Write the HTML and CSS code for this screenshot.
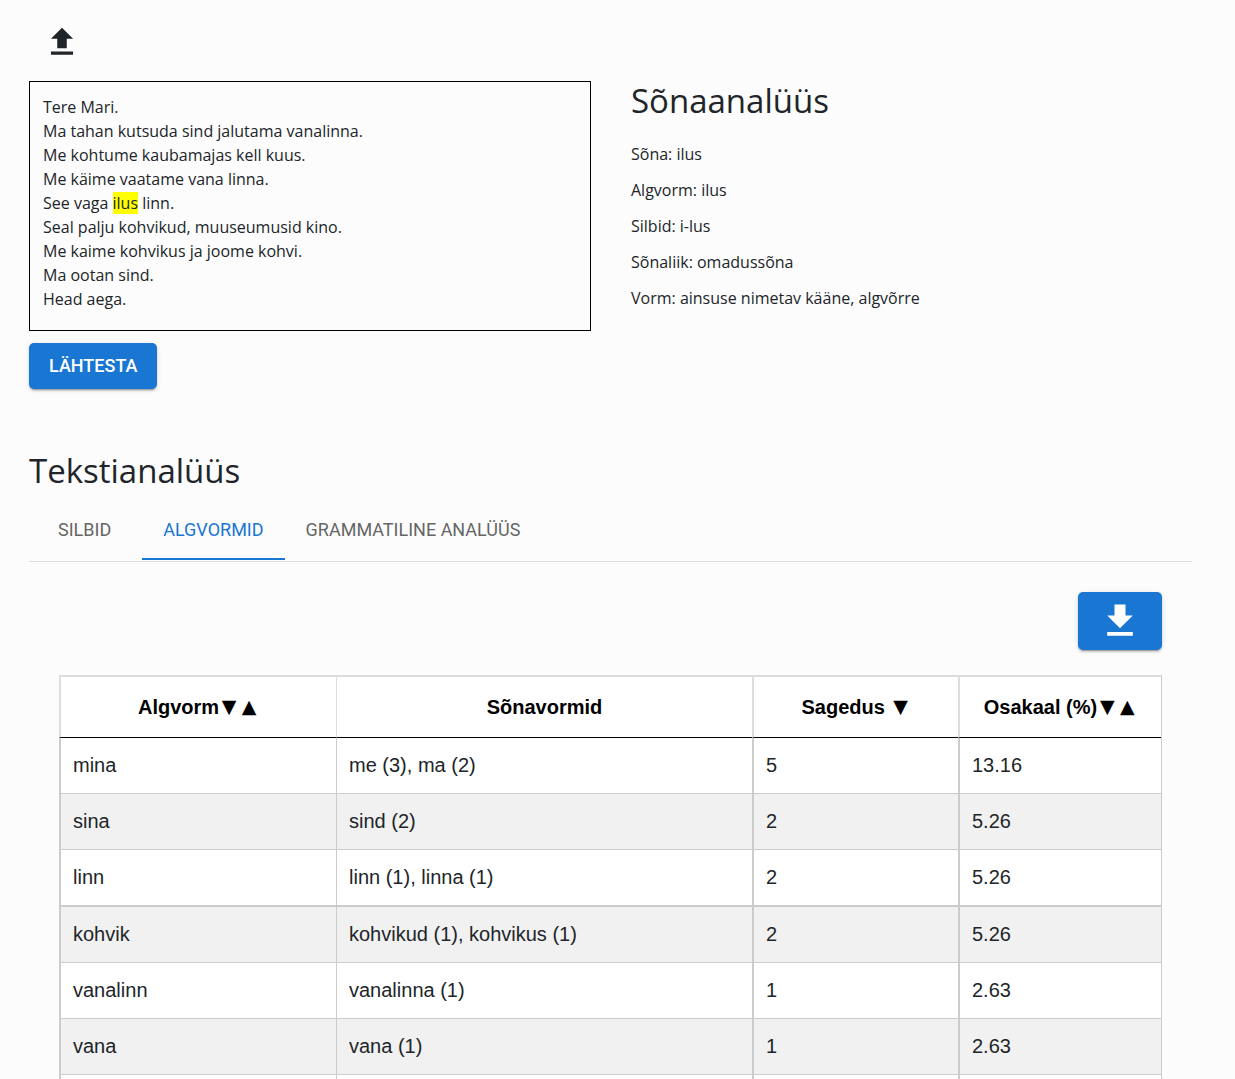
FILE: index.html
```html
<!DOCTYPE html>
<html lang="et">
<head>
<meta charset="utf-8">
<meta name="viewport" content="width=device-width, initial-scale=1">
<title>Tekstianalüüs</title>
<link rel="stylesheet" href="styles.css">
</head>
<body>
<main class="page">
  <button class="upload" type="button" aria-label="Laadi fail üles">
    <svg class="upload-icon" viewBox="0 0 24 24" aria-hidden="true"><path d="M5 20h14v-2H5v2zm0-10h4v6h6v-6h4l-7-7-7 7z"/></svg>
  </button>

  <div class="columns">
    <section class="input-side">
      <div class="text-box">
        Tere Mari.<br>
        Ma tahan kutsuda sind jalutama vanalinna.<br>
        Me kohtume kaubamajas kell kuus.<br>
        Me käime vaatame vana linna.<br>
        See vaga <mark>ilus</mark> linn.<br>
        Seal palju kohvikud, muuseumusid kino.<br>
        Me kaime kohvikus ja joome kohvi.<br>
        Ma ootan sind.<br>
        Head aega.
      </div>
      <button class="button reset" type="button">LÄHTESTA</button>
    </section>
    <section class="word-analysis">
      <h2>Sõnaanalüüs</h2>
      <p>Sõna: ilus</p>
      <p>Algvorm: ilus</p>
      <p>Silbid: i-lus</p>
      <p>Sõnaliik: omadussõna</p>
      <p>Vorm: ainsuse nimetav kääne, algvõrre</p>
    </section>
  </div>

  <section class="text-analysis">
    <h2>Tekstianalüüs</h2>
    <div class="tabs" role="tablist">
      <button class="tab" type="button" role="tab" aria-selected="false">SILBID</button>
      <button class="tab" type="button" role="tab" aria-selected="true">ALGVORMID</button>
      <button class="tab" type="button" role="tab" aria-selected="false">GRAMMATILINE ANALÜÜS</button>
    </div>
    <div class="panel" role="tabpanel">
      <button class="button download" type="button" aria-label="Laadi alla">
        <svg class="download-icon" viewBox="0 0 24 24" aria-hidden="true"><path d="M5 20h14v-2H5v2zM19 9h-4V3H9v6H5l7 7 7-7z"/></svg>
      </button>
      <table class="forms">
        <colgroup><col class="col-lemma"><col class="col-forms"><col class="col-count"><col class="col-share"></colgroup>
        <thead>
          <tr>
            <th scope="col">Algvorm<span class="sort">▼</span><span class="sort">▲</span></th>
            <th scope="col">Sõnavormid</th>
            <th scope="col">Sagedus <span class="sort">▼</span></th>
            <th scope="col">Osakaal (%)<span class="sort">▼</span><span class="sort">▲</span></th>
          </tr>
        </thead>
        <tbody>
          <tr><td>mina</td><td>me (3), ma (2)</td><td>5</td><td>13.16</td></tr>
          <tr><td>sina</td><td>sind (2)</td><td>2</td><td>5.26</td></tr>
          <tr><td>linn</td><td>linn (1), linna (1)</td><td>2</td><td>5.26</td></tr>
          <tr><td>kohvik</td><td>kohvikud (1), kohvikus (1)</td><td>2</td><td>5.26</td></tr>
          <tr><td>vanalinn</td><td>vanalinna (1)</td><td>1</td><td>2.63</td></tr>
          <tr><td>vana</td><td>vana (1)</td><td>1</td><td>2.63</td></tr>
          <tr><td></td><td></td><td></td><td></td></tr>
        </tbody>
      </table>
    </div>
  </section>
</main>
</body>
</html>
```
FILE: styles.css
```css
* {
  box-sizing: border-box;
}

body {
  margin: 0;
  background: #fcfcfc;
  color: #212529;
  font-family: "Open Sans", sans-serif;
  font-size: 16px;
  line-height: 24px;
}

button {
  border: 0;
  cursor: pointer;
  font-family: Roboto, sans-serif;
  font-size: 18px;
}

h2 {
  margin: 0;
  font-size: 33px;
  font-weight: 400;
  line-height: 40px;
}

.page {
  padding: 23px 43px 0 29px;
}

.upload {
  display: block;
  margin: 0 0 20px 14px;
  padding: 0;
  background: none;
}

.upload-icon {
  display: block;
  width: 38px;
  height: 38px;
  fill: #212529;
}

.columns {
  display: grid;
  grid-template-columns: 562fr 561fr;
  gap: 40px;
}

.text-box {
  min-height: 250px;
  padding: 13px;
  border: 1px solid #000;
}

mark {
  background: #ff0;
  color: inherit;
}

.button {
  border-radius: 5px;
  background: #1976d2;
  color: #fff;
  box-shadow: 0 3px 1px -2px rgba(0, 0, 0, 0.2), 0 2px 2px rgba(0, 0, 0, 0.14), 0 1px 5px rgba(0, 0, 0, 0.12);
}

.reset {
  display: block;
  margin-top: 12px;
  padding: 11px 20px;
  font-weight: 500;
  line-height: 24px;
}

.word-analysis p {
  margin: 12px 0 0;
}

.word-analysis h2 + p {
  margin-top: 21px;
}

.text-analysis {
  margin-top: 62px;
}

.tabs {
  display: flex;
  margin-top: 9px;
  border-bottom: 1px solid #dcdcdc;
}

.tab {
  padding: 19px 21px 17px;
  border-bottom: 2px solid transparent;
  margin-bottom: 1px;
  background: none;
  color: #666;
  line-height: 22px;
}

.tab:first-child {
  padding-left: 29px;
  padding-right: 31px;
}

.tab[aria-selected="true"] {
  border-bottom-color: #1976d2;
  color: #1976d2;
}

.panel {
  padding: 30px;
}

.download {
  display: block;
  margin: 0 0 25px auto;
  padding: 7px 20px;
}

.download-icon {
  display: block;
  width: 44px;
  height: 44px;
  fill: #fff;
}

.forms {
  width: 100%;
  table-layout: fixed;
  border-top: 2px solid #ddd;
  border-right: 1px solid #ccc;
  border-spacing: 0;
  background: #fff;
  font-family: "Liberation Sans", Arial, sans-serif;
  font-size: 20px;
}

.col-lemma {
  width: 277px;
}

.col-count {
  width: 206px;
}

.col-share {
  width: 203px;
}

.forms th,
.forms td {
  border-left: 2px solid #ccc;
  border-bottom: 1px solid #ccc;
}

.forms th:nth-child(2),
.forms td:nth-child(2) {
  border-left-width: 1px;
}

.forms th {
  height: 61px;
  padding: 17px 12px;
  border-bottom-color: #000;
  border-left-color: #ddd;
  color: #000;
}

.forms td {
  height: 56px;
  padding: 15px 12px 16px;
}

.forms tbody tr:nth-child(even) {
  background: #f1f1f1;
}

.forms tbody tr:nth-child(3) td {
  height: 57px;
  border-bottom-width: 2px;
}

.sort {
  display: inline-block;
  width: 20px;
  font-family: "DejaVu Sans", sans-serif;
  font-size: 19px;
  line-height: 20px;
  text-align: center;
  vertical-align: 1px;
}
```
